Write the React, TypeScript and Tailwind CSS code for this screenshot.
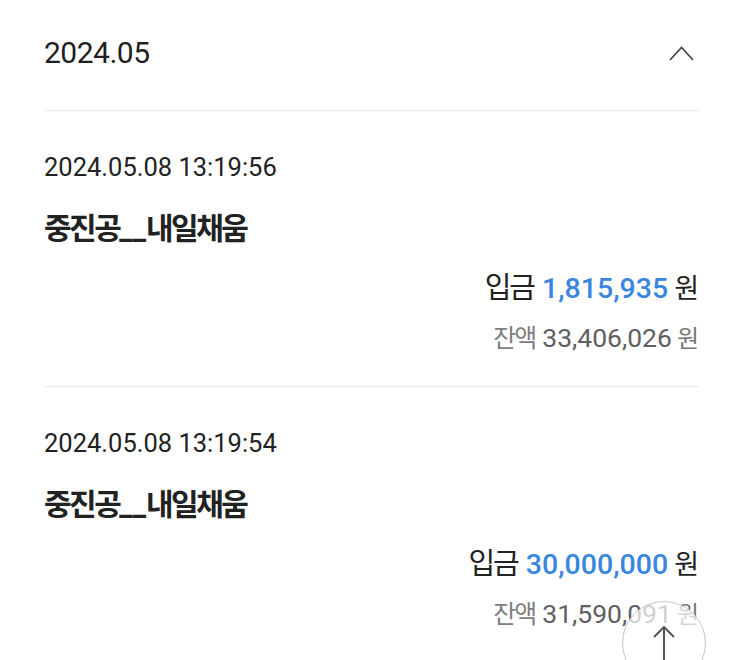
import React from "react";

const FONT = { fontFamily: "Roboto, 'Noto Sans CJK KR', sans-serif" };

type Tx = { date: string; name: string; amount: string; balance: string };

const items: Tx[] = [
  { date: "2024.05.08 13:19:56", name: "중진공__내일채움", amount: "1,815,935", balance: "33,406,026" },
  { date: "2024.05.08 13:19:54", name: "중진공__내일채움", amount: "30,000,000", balance: "31,590,091" },
];

function Ko({ children, className = "" }: { children: React.ReactNode; className?: string }) {
  return (
    <span className={className} style={{ fontFamily: "'Noto Sans CJK KR', sans-serif" }}>
      {children}
    </span>
  );
}

function Item({ tx }: { tx: Tx }) {
  return (
    <div className="border-b border-[#ebebeb] pt-[41px] pb-[32px]">
      <div className="text-[25.5px] leading-[30px] text-[#222]">{tx.date}</div>
      <div className="mt-[25px] text-[30px] leading-[38px] font-bold text-[#222] tracking-[-2.5px]">
        <Ko>중진공</Ko>
        <span className="tracking-normal">__</span>
        <Ko>내일채움</Ko>
      </div>
      <div className="mt-[19px] flex justify-end items-baseline text-[28.5px] leading-[36px] text-[#222]">
        <Ko className="tracking-[-2px] text-[29px]">입금</Ko>
        <span className="ml-[8px] font-medium text-[#3a86df]">{tx.amount}</span>
        <Ko className="ml-[6px] text-[27px]">원</Ko>
      </div>
      <div className="mt-[13px] flex justify-end items-baseline text-[26.5px] leading-[32px] text-[#5f5f5f]">
        <Ko className="tracking-[-2px] text-[25px] text-[#808080]">잔액</Ko>
        <span className="ml-[7px]">{tx.balance}</span>
        <Ko className="ml-[5px] text-[24px] text-[#777]">원</Ko>
      </div>
    </div>
  );
}

export default function App() {
  return (
    <div className="relative h-[660px] w-[743px] overflow-hidden bg-white" style={FONT}>
      <div className="px-[44px]">
        <div className="flex items-center justify-between border-b border-[#ebebeb] pt-[35px] pb-[39px]">
          <div className="text-[30px] leading-[36px] text-[#1f1f1f] tracking-[-0.5px]">2024.05</div>
          <svg width="25" height="15" viewBox="0 0 25 15" className="mr-[5px]" fill="none">
            <path d="M1 14 L12.5 1.5 L24 14" stroke="#444" strokeWidth="1.7" />
          </svg>
        </div>
        {items.map((tx, i) => (
          <Item key={i} tx={tx} />
        ))}
      </div>
      <div className="absolute left-[622px] top-[601px] h-[84px] w-[84px] rounded-full border border-[#c8c8c8] bg-white/70 flex justify-center">
        <svg width="24" height="50" viewBox="0 0 24 50" className="mt-[24px]" fill="none">
          <path d="M12 1 L12 50 M2 11 L12 1 L22 11" stroke="#555" strokeWidth="2" />
        </svg>
      </div>
    </div>
  );
}
